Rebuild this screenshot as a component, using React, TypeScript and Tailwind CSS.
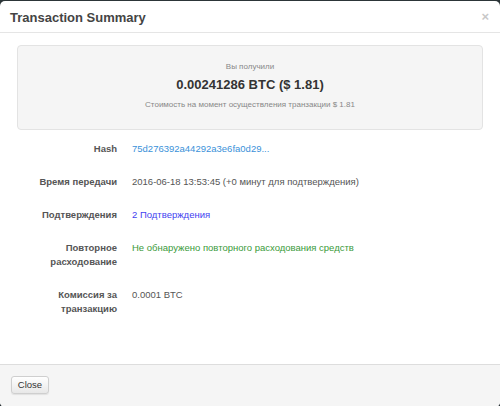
import React from "react";

const rows: { label: string; value: React.ReactNode }[] = [
  {
    label: "Hash",
    value: <span className="text-[#3a91d9]">75d276392a44292a3e6fa0d29...</span>,
  },
  {
    label: "Время передачи",
    value: <span>2016-06-18 13:53:45 (+0 минут для подтверждения)</span>,
  },
  {
    label: "Подтверждения",
    value: <span className="text-[#3f3ff0]">2 Подтверждения</span>,
  },
  {
    label: "Повторное расходование",
    value: <span className="text-[#3a9a3a]">Не обнаружено повторного расходования средств</span>,
  },
  {
    label: "Комиссия за транзакцию",
    value: <span>0.0001 BTC</span>,
  },
];

export default function App() {
  return (
    <div
      className="w-[500px] h-[406px] bg-[#2c3538] pt-[1px] overflow-hidden"
      style={{ fontFamily: '"Liberation Sans", Arial, sans-serif' }}
    >
      <div className="h-[406px] bg-white rounded-[5px] flex flex-col overflow-hidden">
        {/* Header */}
        <div className="h-[32px] border-b border-[#e5e5e5] flex items-center justify-between pl-[10px] pr-[11px] shrink-0">
          <div className="text-[13px] font-bold text-[#444] leading-none mt-[1px]">Transaction Summary</div>
          <div className="text-[13px] font-bold text-[#c8c8c8] leading-none">×</div>
        </div>

        {/* Body */}
        <div className="flex-1 px-[17px] pt-[12px]">
          <div className="h-[85px] bg-[#f5f5f5] border border-[#e3e3e3] rounded-[4px] flex flex-col items-center pt-[15px]">
            <div className="text-[8px] text-[#888] leading-[11px]">Вы получили</div>
            <div className="text-[13px] font-bold text-[#333] leading-[16px] mt-[5px]">0.00241286 BTC ($ 1.81)</div>
            <div className="text-[8px] text-[#888] leading-[11px] mt-[6px]">Стоимость на момент осуществления транзакции $ 1.81</div>
          </div>

          <div className="grid grid-cols-[100px_1fr] gap-x-[15px] gap-y-[19px] mt-[12px] text-[9.5px] leading-[14px] text-[#555]">
            {rows.map((r) => (
              <React.Fragment key={r.label}>
                <div className="text-right font-bold text-[#555]">{r.label}</div>
                <div>{r.value}</div>
              </React.Fragment>
            ))}
          </div>
        </div>

        {/* Footer */}
        <div className="h-[43px] shrink-0 bg-[#f5f5f5] border-t border-[#dddddd] flex items-start pt-[11px] px-[11px]">
          <button className="w-[38px] h-[18px] rounded-[3px] border border-[#cfcfcf] bg-gradient-to-b from-white to-[#e8e8e8] text-[9.5px] text-[#333] shadow-[0_1px_1px_rgba(0,0,0,0.08)] leading-none">
            Close
          </button>
        </div>
      </div>
    </div>
  );
}
